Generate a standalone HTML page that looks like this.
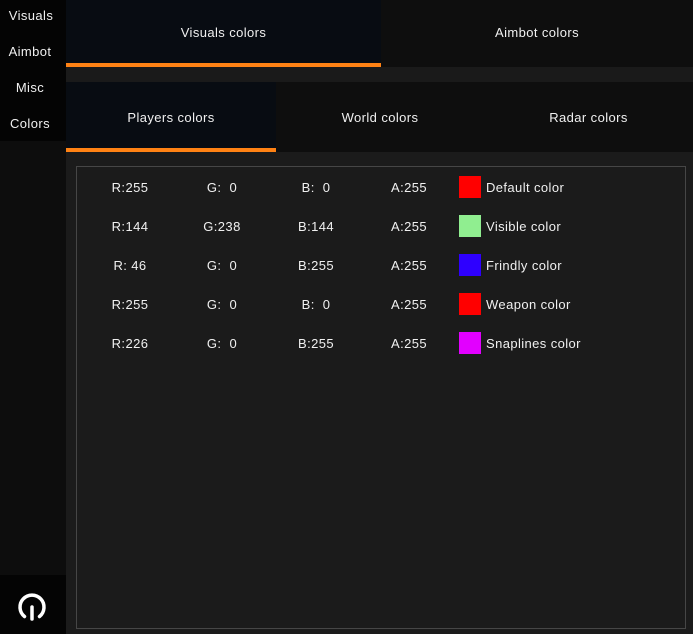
<!DOCTYPE html>
<html><head><meta charset="utf-8"><style>
*{margin:0;padding:0;box-sizing:border-box}
body{width:693px;height:634px;background:#1b1b1b;font-family:"Liberation Sans",sans-serif;color:#f0f0f0;font-size:13px;letter-spacing:0.4px;position:relative;overflow:hidden}
.abs{position:absolute}
.side{left:0;top:0;width:66px;height:634px;background:#0d0d0d}
.sidetop{left:0;top:0;width:66px;height:141px;background:#040404}
.sidebot{left:0;top:575px;width:66px;height:59px;background:#040404}
.si{position:absolute;left:0;width:66px;text-align:center;font-size:13px;line-height:16px}
.tab{position:absolute;text-align:center;font-size:13px}
.c{position:absolute;width:60px;text-align:center;font-size:13px;line-height:16px}
.sw{position:absolute;left:459px;width:22px;height:22px}
.lb{position:absolute;left:486px;font-size:13px;line-height:16px}
</style></head><body>
<div class="abs side"></div><div class="abs sidetop"></div><div class="abs sidebot"></div>
<div class="si" style="top:8px;left:-2px">Visuals</div>
<div class="si" style="top:44px;left:-3px">Aimbot</div>
<div class="si" style="top:80px;left:-3px">Misc</div>
<div class="si" style="top:116px;left:-3px">Colors</div>
<svg class="abs" style="left:15px;top:590px" width="34" height="34" viewBox="0 0 34 34"><path d="M9.5 26.5 A12 12 0 1 1 24.5 26.5" fill="none" stroke="#fff" stroke-width="3.5" stroke-linecap="round"/><line x1="17" y1="17" x2="17" y2="29" stroke="#fff" stroke-width="3.5" stroke-linecap="round"/></svg>
<div class="abs" style="left:66px;top:0;width:627px;height:67px;background:#0e0e0e"></div>
<div class="abs" style="left:66px;top:0;width:315px;height:67px;background:#080c12"></div>
<div class="abs" style="left:66px;top:63px;width:315px;height:4px;background:#ff8214"></div>
<div class="tab" style="left:66px;width:315px;top:25px">Visuals colors</div>
<div class="tab" style="left:381px;width:312px;top:25px">Aimbot colors</div>
<div class="abs" style="left:66px;top:67px;width:627px;height:15px;background:#1a1a1a"></div>
<div class="abs" style="left:66px;top:82px;width:627px;height:70px;background:#0e0e0e"></div>
<div class="abs" style="left:66px;top:82px;width:210px;height:70px;background:#080c12"></div>
<div class="abs" style="left:66px;top:148px;width:210px;height:4px;background:#ff8214"></div>
<div class="tab" style="left:66px;width:210px;top:110px">Players colors</div>
<div class="tab" style="left:276px;width:208px;top:110px">World colors</div>
<div class="tab" style="left:484px;width:209px;top:110px">Radar colors</div>
<div class="abs" style="left:76px;top:166px;width:610px;height:463px;border:1px solid #464646"></div>

<div class="c" style="left:100px;top:180px">R:255</div><div class="c" style="left:192px;top:180px">G:&nbsp; 0</div><div class="c" style="left:286px;top:180px">B:&nbsp; 0</div><div class="c" style="left:379px;top:180px">A:255</div>
<div class="sw" style="top:176px;background:#ff0000"></div><div class="lb" style="top:180px">Default color</div>

<div class="c" style="left:100px;top:219px">R:144</div><div class="c" style="left:192px;top:219px">G:238</div><div class="c" style="left:286px;top:219px">B:144</div><div class="c" style="left:379px;top:219px">A:255</div>
<div class="sw" style="top:215px;background:#90ee90"></div><div class="lb" style="top:219px">Visible color</div>

<div class="c" style="left:100px;top:258px">R: 46</div><div class="c" style="left:192px;top:258px">G:&nbsp; 0</div><div class="c" style="left:286px;top:258px">B:255</div><div class="c" style="left:379px;top:258px">A:255</div>
<div class="sw" style="top:254px;background:#2e00ff"></div><div class="lb" style="top:258px">Frindly color</div>

<div class="c" style="left:100px;top:297px">R:255</div><div class="c" style="left:192px;top:297px">G:&nbsp; 0</div><div class="c" style="left:286px;top:297px">B:&nbsp; 0</div><div class="c" style="left:379px;top:297px">A:255</div>
<div class="sw" style="top:293px;background:#ff0000"></div><div class="lb" style="top:297px">Weapon color</div>

<div class="c" style="left:100px;top:336px">R:226</div><div class="c" style="left:192px;top:336px">G:&nbsp; 0</div><div class="c" style="left:286px;top:336px">B:255</div><div class="c" style="left:379px;top:336px">A:255</div>
<div class="sw" style="top:332px;background:#e200ff"></div><div class="lb" style="top:336px">Snaplines color</div>
</body></html>
